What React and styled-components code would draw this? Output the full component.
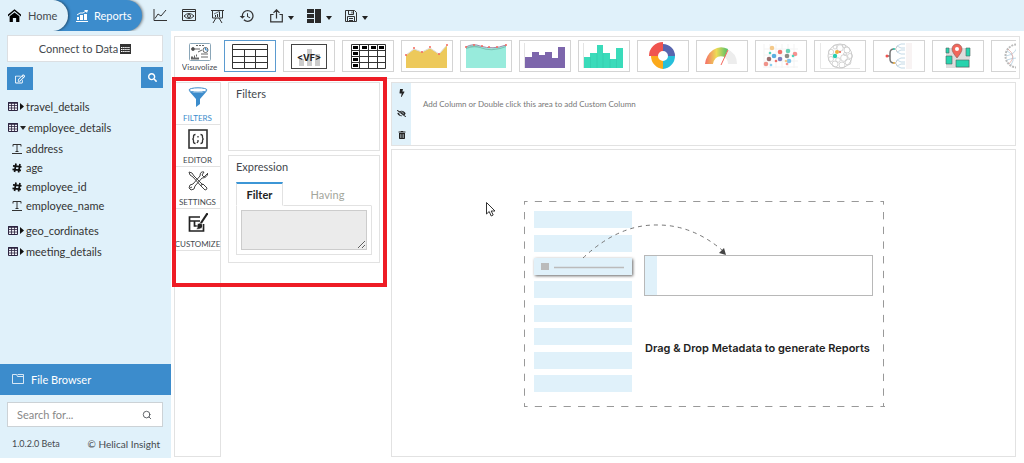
import React from 'react';
import styled, { createGlobalStyle } from 'styled-components';
import { FaBolt, FaEyeSlash, FaRegEdit, FaSearch, FaTrashAlt } from 'react-icons/fa';
import { MdHistory } from 'react-icons/md';
import { FiSearch } from 'react-icons/fi';

const GlobalStyle = createGlobalStyle`
  :root {
    --pale: #e0f1fa;
    --accent: #3c8ccc;
    --line: #e2e2e2;
    --text: #44494e;
  }

  * {
    box-sizing: border-box;
  }

  body {
    margin: 0;
    background-color: #fff;
    color: var(--text);
    font-family: Lato, 'Liberation Sans', sans-serif;
    font-size: 11px;
    line-height: 14px;
  }

  button,
  input,
  textarea {
    margin: 0;
    font: inherit;
    color: inherit;
  }

  button {
    padding: 0;
    border: 0;
    background: none;
    cursor: pointer;
  }

  svg {
    display: block;
    flex: none;
  }
`;

const Page = styled.div`
  display: flex;
  flex-direction: column;
  min-height: 100vh;
  padding-bottom: 5px;
`;

const TopBar = styled.header`
  display: flex;
  align-items: center;
  height: 31px;
  background-color: var(--pale);
`;

const Tabs = styled.nav`
  display: flex;
  align-self: stretch;
`;

const TopTab = styled.a`
  display: flex;
  align-items: center;
  gap: ${(p) => (p.$active ? 6 : 7)}px;
  width: ${(p) => (p.$active ? 88 : 68)}px;
  margin-left: ${(p) => (p.$active ? -14 : 0)}px;
  padding-left: ${(p) => (p.$active ? 22 : 8)}px;
  border-radius: 0 16px 16px 0;
  background-color: ${(p) => (p.$active ? 'var(--accent)' : 'var(--pale)')};
  box-shadow: 1px 0 3px rgba(0, 0, 0, 0.5);
  clip-path: inset(0 -6px 0 0);
  color: ${(p) => (p.$active ? '#fff' : 'var(--text)')};
  text-decoration: none;
  z-index: ${(p) => (p.$active ? 0 : 1)};
`;

const Tools = styled.div`
  display: flex;
  align-items: center;
  gap: 15px;
  margin-left: 11px;
  color: #333;
`;

const ToolMenus = styled.div`
  display: flex;
  align-items: center;
  gap: 13px;
`;

const Tool = styled.button`
  display: flex;
  align-items: center;
  gap: 5px;

  svg + svg {
    margin-top: 5px;
  }
`;

const Body = styled.div`
  display: flex;
  flex: 1;
`;

const Sidebar = styled.aside`
  display: flex;
  flex-direction: column;
  flex: none;
  width: 171px;
  background-color: var(--pale);
`;

const ConnectButton = styled.button`
  display: flex;
  align-items: center;
  justify-content: center;
  gap: 2px;
  height: 27px;
  margin: 4px 8px 0 7px;
  border: 1px solid #dcdfe2;
  background-color: #fff;
`;

const SidebarActions = styled.div`
  display: flex;
  justify-content: space-between;
  align-items: flex-start;
  margin: 5px 8px 0 7px;
`;

const SquareButton = styled.button`
  display: flex;
  align-items: center;
  justify-content: center;
  width: ${(p) => p.$width}px;
  height: ${(p) => p.$height}px;
  background-color: var(--accent);
  color: #fff;
`;

const Tree = styled.ul`
  flex: 1;
  margin: 6px 0 0;
  padding: 0 0 0 8px;
  list-style: none;
  color: #333;

  ul {
    margin: 1px 0 5px;
    padding: 0 0 0 4px;
    list-style: none;
  }
`;

const TableRow = styled.button`
  display: flex;
  align-items: center;
  gap: 2px;
  height: 21px;
`;

const FieldRow = styled.li`
  display: flex;
  align-items: center;
  gap: 4px;
  height: 19px;
`;

const FileBrowser = styled.button`
  display: flex;
  align-items: center;
  gap: 7px;
  height: 31px;
  padding-left: 12px;
  background-color: var(--accent);
  color: #fff;
`;

const SearchBox = styled.label`
  display: flex;
  align-items: center;
  height: 25px;
  margin: 7px 8px 0 7px;
  padding: 0 10px 0 9px;
  border: 1px solid #ccd2d6;
  background-color: #fff;

  input {
    flex: 1;
    min-width: 0;
    padding: 0;
    border: 0;
    outline: none;
    background: none;
  }

  input::placeholder {
    color: #888;
  }
`;

const SidebarFooter = styled.footer`
  display: flex;
  align-items: center;
  justify-content: space-between;
  height: 31px;
  padding: 2px 11px 0 12px;
  font-size: 10px;

  small {
    font-size: 9px;
  }
`;

const Main = styled.main`
  display: flex;
  flex-direction: column;
  flex: 1;
  min-width: 0;
  padding: 5px 4px 0 3px;
`;

const ChartStrip = styled.section`
  height: 43px;
  padding: 3px 3px 0 7px;
  border: 1px solid var(--line);
`;

const ChartList = styled.div`
  display: flex;
  gap: 7px;
  overflow: hidden;
`;

const ChartTile = styled.button`
  display: flex;
  align-items: center;
  justify-content: center;
  flex: none;
  width: 52px;
  height: 32px;
  border: 1px solid ${(p) => (p.$selected ? '#5b9bd0' : '#d4d4d4')};
`;

const Visualize = styled.button`
  display: flex;
  flex-direction: column;
  align-items: center;
  flex: none;
  gap: 1px;
  width: 35px;
  height: 32px;
  padding-top: 3px;
  font-size: 8px;
  line-height: 10px;
`;

const Workspace = styled.div`
  position: relative;
  display: flex;
  flex: 1;
  margin: 3px 4px 1px 0;
`;

const PanelNav = styled.nav`
  flex: none;
  width: 47px;
  border: 1px solid var(--line);
`;

const PanelTab = styled.button`
  display: flex;
  flex-direction: column;
  align-items: center;
  justify-content: space-between;
  width: 100%;
  height: 42px;
  padding: 4px 0 1px;
  border-bottom: 1px solid var(--line);
  color: ${(p) => (p.$active ? 'var(--accent)' : 'var(--text)')};
  font-size: 8px;
  line-height: 10px;
`;

const FilterColumn = styled.div`
  display: flex;
  flex-direction: column;
  flex: none;
  gap: 4px;
  width: 152px;
  margin-left: 7px;
`;

const Panel = styled.section`
  height: ${(p) => p.$height}px;
  padding: 4px 7px 0;
  border: 1px solid var(--line);

  h2 {
    margin: 0;
    font-size: 11px;
    font-weight: 400;
  }
`;

const ExpressionTabs = styled.div`
  display: flex;
  margin-top: 8px;
`;

const ExpressionTab = styled.button`
  width: ${(p) => (p.$active ? 47 : 89)}px;
  height: 24px;
  border-top: 2px solid ${(p) => (p.$active ? '#3c96d6' : 'transparent')};
  border-right: 1px solid ${(p) => (p.$active ? 'var(--line)' : 'transparent')};
  border-bottom: 1px solid ${(p) => (p.$active ? 'transparent' : 'var(--line)')};
  border-left: 1px solid ${(p) => (p.$active ? 'var(--line)' : 'transparent')};
  color: ${(p) => (p.$active ? '#222' : '#a3a69c')};
  font-weight: ${(p) => (p.$active ? 700 : 400)};
`;

const ExpressionBody = styled.div`
  height: 49px;
  padding: 4px;
  border: 1px solid var(--line);
  border-top: 0;

  textarea {
    display: block;
    width: 100%;
    height: 40px;
    border: 1px solid #ccc;
    outline: none;
    background-color: #ebebeb;
  }
`;

const Report = styled.div`
  display: flex;
  flex-direction: column;
  flex: 1;
  gap: 3px;
  min-width: 0;
  margin-left: 11px;
`;

const ColumnArea = styled.section`
  display: flex;
  height: 64px;
  border: 1px solid var(--line);

  p {
    margin: 14px 0 0 12px;
    color: #777;
    font-size: 8px;
  }
`;

const ColumnActions = styled.div`
  display: flex;
  flex-direction: column;
  align-items: center;
  justify-content: space-around;
  width: 19px;
  background-color: var(--pale);
  color: #222;
`;

const Canvas = styled.section`
  position: relative;
  display: flex;
  align-items: center;
  justify-content: center;
  flex: 1;
  padding: 2px 0 0 1px;
  border: 1px solid var(--line);
`;

const Pointer = styled.svg`
  position: absolute;
  top: 52px;
  left: 94px;
`;

const Highlight = styled.div`
  position: absolute;
  top: -5px;
  left: -2px;
  width: 215px;
  height: 210px;
  border: 4px solid #ee1c25;
  pointer-events: none;
`;

const HomeIcon = () => (
  <svg width="13" height="13" viewBox="0 0 16 16" fill="#000">
    <path d="M16 9.2 8 2.6 0 9.2V6.8L8 .2l8 6.6zM14 9v7H10v-5H6v5H2V9l6-4.8z" />
  </svg>
);

const ReportsIcon = () => (
  <svg width="12" height="12" viewBox="0 0 12 12" fill="#fff">
    <path d="M1 7h2v3H1zM4 5h3v5H4zM8 4h3v6H8zM0 11h12v1H0z" />
    <path d="M1 5 4 3l3 0 3-2" fill="none" stroke="#fff" />
    <path d="m8 0 4 0-1 3z" />
  </svg>
);

const LineIcon = () => (
  <svg width="14" height="13" viewBox="0 0 14 13" fill="none" stroke="#333">
    <path d="M1 0v11.500h13M2 9.500 5 5l3 2 5-6" />
  </svg>
);

const PreviewIcon = () => (
  <svg width="14" height="13" viewBox="0 0 14 13" fill="none" stroke="#333">
    <path d="M.5.500h13v11H.500zM0 2.500h14" />
    <path d="M2 7q5-5 10 0-5 5-10 0z" />
    <circle cx="7" cy="7" r="1.500" />
  </svg>
);

const BoardIcon = () => (
  <svg width="13" height="14" viewBox="0 0 13 14" fill="none" stroke="#333">
    <path d="M0 1.500h13M1.500 2v7h10V2M5 9l-3 5M8 9l3 5M4.500 8V6M6.500 8V5M8.500 8V3" />
    <path d="M3 5l2-1 4-2" strokeWidth=".7" />
  </svg>
);

const ShareIcon = () => (
  <svg width="13" height="14" viewBox="0 0 13 14" fill="none" stroke="#333">
    <path d="M3.500 5.500H.700v7.300h11.600V5.500H9.500M6.500 9.500V1M3.500 3.800l3-3 3 3" strokeWidth="1.200" />
  </svg>
);

const LayoutIcon = () => (
  <svg width="14" height="14" viewBox="0 0 14 14" fill="#2a2a2a">
    <path d="M0 0h7v4H0zM0 5h7v4H0zM0 10h7v4H0zM8 0h6v14H8z" />
  </svg>
);

const SaveIcon = () => (
  <svg width="12" height="12" viewBox="0 0 12 12" fill="none" stroke="#333">
    <path d="M.5.500h9l2 2v9H.500zM3.500.500v4h5v-4M2.500 11.500v-5h7v5M4 8.500h4M4 10.500h4M7 1.500v2" />
  </svg>
);

const CaretDown = () => (
  <svg width="6" height="4" viewBox="0 0 6 4">
    <path d="M0 0h6L3 4z" fill="#222" />
  </svg>
);

const CaretRight = () => (
  <svg width="4" height="7" viewBox="0 0 4 7">
    <path d="M0 0v7l4-3.500z" fill="#111" />
  </svg>
);

const DataIcon = () => (
  <svg width="11" height="10" viewBox="0 0 11 10">
    <path d="M0 0h11v10H0z" fill="#333" />
    <path d="M1 3.500h9M1 5.500h9M1 7.500h9" stroke="#fff" strokeDasharray="1.500 .6" />
  </svg>
);

const TableIcon = () => (
  <svg width="10" height="9" viewBox="0 0 10 9" fill="none" stroke="#2d2440">
    <path d="M.5.500h9v8H.500z" fill="#eef0f6" />
    <path d="M0 1h10" strokeWidth="1.500" />
    <path d="M0 3.500h10M0 6h10M3.500 0v9M6.500 0v9" strokeWidth=".8" />
  </svg>
);

const TextIcon = () => (
  <svg width="10" height="10" viewBox="0 0 10 10" fill="none" stroke="#333">
    <path d="M1 2.500V.500h8v2M5 .500v7M3.500 7.500h3M0 9.500h10" />
  </svg>
);

const NumberIcon = () => (
  <svg width="10" height="10" viewBox="0 0 10 10" fill="none" stroke="#111" strokeWidth="1.700">
    <path d="M4 .500 2.500 9M8 1 6.500 9.500M1 2.800l8.500 1M.5 6.300l8.500 1" />
  </svg>
);

const FolderIcon = () => (
  <svg width="12" height="11" viewBox="0 0 12 11" fill="none" stroke="#fff">
    <path d="M.5 9.500v-9h4l1 2h6v7zM5.500.500h6v2" strokeWidth=".8" />
  </svg>
);

const VisualizeIcon = () => (
  <svg width="22" height="18" viewBox="0 0 22 18" fill="none" stroke="#666">
    <rect x=".5" y=".5" width="21" height="17" rx="1" stroke="#8aa6b8" />
    <path d="M7 2.500h8" strokeDasharray="2 1" />
    <circle cx="4" cy="6" r="1.500" fill="#444" />
    <path d="M6 6h5M12 11h7M12 14h7M9 9l4-2" />
    <circle cx="16.500" cy="7" r="2.500" />
    <path d="M16.500 4.500V7H19" stroke="#3c8ccc" />
    <path d="M2 14.500h2M5 13.500h1M7 12.500h1M2 15.500h8" strokeWidth="2" />
  </svg>
);

const FilterIcon = () => (
  <svg width="20" height="20" viewBox="0 0 20 20">
    <path d="M1 4q9 4 18 0l-7 8v5l-4 3v-8z" fill="#3c8ccc" />
    <ellipse cx="10" cy="3" rx="9" ry="2.200" fill="#fff" stroke="#3c8ccc" />
  </svg>
);

const EditorIcon = () => (
  <svg width="20" height="20" viewBox="0 0 20 20" fill="none" stroke="#333">
    <rect x="1" y="1" width="18" height="18" strokeWidth="1.600" />
    <path
      d="M7.500 5.500q-2 0-2 2v1q0 1.500-1.200 1.500 1.200 0 1.200 1.500v1q0 2 2 2M12.500 5.500q2 0 2 2v1q0 1.500 1.200 1.500-1.200 0-1.200 1.500v1q0 2-2 2M10 7v1.500M10 11v1.500l-1 1.500"
      strokeWidth="1.300"
    />
  </svg>
);

const SettingsIcon = () => (
  <svg width="20" height="20" viewBox="0 0 20 20" fill="none" stroke="#444">
    <path d="M1 1l3 1 2 3 9 9M1 1l1 3 3 2 8 9M13 14l2-1 4 4q0 2-2 2l-4-4z" />
    <path d="M19 3l-3 3-2-2 2-3q-4-1-4 4l-7 8q-4 0-4 4l2 2q4 0 4-4l7-8q5 0 6-5zM2 17l2-1" />
  </svg>
);

const CustomizeIcon = () => (
  <svg width="20" height="20" viewBox="0 0 20 20" fill="none" stroke="#222">
    <path d="M12 4H1.500v14h14v-7M2 8h10M6.500 8v5h4" strokeWidth="1.700" />
    <path d="M19 1l-6 9" strokeWidth="2.200" strokeLinecap="round" />
    <path d="M12 10q4 1 2 5-3 2-6 1 2-1 1-3 0-3 3-3z" fill="#222" stroke="#fff" strokeWidth=".6" />
  </svg>
);

const GridChart = () => (
  <svg width="36" height="25" viewBox="0 0 36 25" fill="none" stroke="#333">
    <path d="M.5.500h35v24H.500zM0 5.500h36M0 12.500h36M0 18.500h36M12.500 5v20M23.500 5v20" />
  </svg>
);

const VfChart = () => (
  <svg width="36" height="25" viewBox="0 0 36 25">
    <rect x=".5" y=".5" width="35" height="24" fill="#fff" stroke="#444" />
    <path d="M8 15h5v7H8zM16 5h5v17h-5zM24 10h5v12h-5z" fill="#ccc" />
    <text x="18" y="17" fill="#222" fontFamily="Inter, sans-serif" fontSize="9" fontWeight="700" textAnchor="middle">
      &lt;VF&gt;
    </text>
  </svg>
);

const CrosstabChart = () => (
  <svg width="35" height="25" viewBox="0 0 35 25">
    <path
      d="M.5.500h34v24H.500zM0 6.500h35M0 12.500h35M0 18.500h35M8.500 0v25M17.500 0v25M26.500 0v25"
      fill="none"
      stroke="#333"
    />
    <path d="M2 2h5v3H2zM11 2h5v3h-5zM20 2h5v3h-5zM28 2h5v3h-5zM2 8h5v3H2zM2 14h5v3H2zM2 20h5v3H2z" fill="#000" />
  </svg>
);

const AreaChart = () => (
  <svg width="44" height="26" viewBox="0 0 44 26">
    <path d="M1 12 9 6l8 3 8-4 9 6 8-9v23H1z" fill="#edc95b" />
    <path d="M1 12 9 6l8 3 8-4 9 6 8-9" fill="none" stroke="#ddd" />
    {[[1, 12], [9, 5], [17, 9], [25, 4], [34, 11], [42, 2]].map(([x, y]) => (
      <circle key={x} cx={x} cy={y} r="1" fill="#f4675c" />
    ))}
  </svg>
);

const SplineChart = () => (
  <svg width="42" height="26" viewBox="0 0 42 26">
    <path d="M1 4q7-4 14-1 13 5 26-1v23H1z" fill="#98ebdc" />
    <path d="M1 5q7-4 14-1 13 5 26-1v1q-13 6-26 1-7-2-14 1z" fill="#7cc0b4" />
    <path d="M1 4q7-4 14-1 13 4 26-1" fill="none" stroke="#a08aa8" />
    {[[1, 4], [9, 2], [17, 3], [24, 4], [32, 4], [41, 2]].map(([x, y]) => (
      <circle key={x} cx={x} cy={y} r="1" fill="#f4675c" />
    ))}
  </svg>
);

const StepChart = () => (
  <svg width="42" height="26" viewBox="0 0 42 26">
    <path d="M.5 0v25" stroke="#e4e4e4" />
    <path d="M1 14h7V9h7v3h6V9h7v6h6V4h7v21H1z" fill="#7d66ac" />
  </svg>
);

const BarChart = () => (
  <svg width="42" height="26" viewBox="0 0 42 26">
    <path d="M.5 0v25" stroke="#e4e4e4" />
    <path d="M1 14h6v11H1zM7 10h7v15H7zM14 2h6v23h-6zM20 10h7v15h-7zM27 16h6v9h-6zM33 5h7v20h-7z" fill="#3adbba" />
    <path d="M7.500 14v11M14 10v15M20 10v15M27 16v9M33.500 16v9" stroke="#32caab" strokeWidth=".6" />
  </svg>
);

const DonutChart = () => (
  <svg width="28" height="28" viewBox="-14 -14 28 28">
    <path d="M0-14v9a5 5 0 0 0-5 5h-9a14 14 0 0 1 14-14z" fill="#f0544f" />
    <path d="M0-12A12 12 0 0 1 12 0H5a5 5 0 0 0-5-5z" fill="#5865ae" />
    <path d="M12 0A13 13 0 0 1 0 13V5a5 5 0 0 0 5-5z" fill="#27bfda" />
    <path d="M0 13A13 13 0 0 1-12 0h7a5 5 0 0 0 5 5z" fill="#fba91b" />
  </svg>
);

const GaugeChart = () => (
  <svg width="34" height="18" viewBox="0 0 34 18">
    <defs>
      <linearGradient id="gauge">
        <stop offset="0" stopColor="#f56e6a" />
        <stop offset=".5" stopColor="#eedb55" />
        <stop offset="1" stopColor="#4cc06c" />
      </linearGradient>
    </defs>
    <path d="M22 2q10 4 10 15h-9q0-5-4-7z" fill="#ededed" />
    <path d="M0 17Q1 8 8 3t15-1l-3 8q-10-3-12 7z" fill="url(#gauge)" />
    <path d="M23 3l-7 15" stroke="#f4675c" />
  </svg>
);

const bubbles = [
  [8, 5, 2, '#f4c98a'], [16, 9, 2, '#f0716a'], [24, 8, 2, '#6bd3b7'], [31, 11, 2, '#f59391'],
  [6, 10, 1, '#4fd3bb'], [10, 13, 2, '#5aaee0'], [5, 16, 2, '#9b6f6f'], [16, 16, 2, '#7d7fc0'],
  [23, 13, 2, '#8c8c84'], [29, 13, 1, '#4fd3bb'], [25, 18, 2, '#7fc4ea'], [2, 21, 2, '#f0938a'],
  [7, 22, 1, '#8bd0f0'], [12, 18, 1, '#f0716a'], [22, 18, 1, '#f4c98a'], [23, 21, 1, '#f59391']
];

const BubbleChart = () => (
  <svg width="36" height="26" viewBox="-1 0 36 26">
    <path d="M0 1v24M6 1v24M12 1v24M18 1v24M24 1v24M30 1v24M0 6h34M0 12h34M0 18h34M0 24h34" stroke="#f3f3f3" />
    {bubbles.map(([x, y, r, fill]) => (
      <circle key={`${x}-${y}`} cx={x} cy={y} r={r + 0.3} fill={fill} />
    ))}
  </svg>
);

const packed = [
  [0, -8, 3.3], [7, -6, 3], [10, 0, 2.5], [8, 6, 3], [2, 9, 3], [-5, 8, 3], [-9, 3, 2.5],
  [-9, -4, 2.7], [-5, -9, 2], [4, 2, 3.4], [-2, 4, 2.3], [5, -2, 1.5], [4, -10, 1.6]
];

const PackChart = () => (
  <svg width="40" height="26" viewBox="-20 -13 40 26" fill="none" stroke="#ccc">
    <path d="M-19.500-13v25.500H20" stroke="#e8e8e8" />
    <circle r="12" />
    {packed.map(([x, y, r]) => (
      <circle key={`${x}-${y}`} cx={x} cy={y} r={r} strokeWidth=".8" />
    ))}
    <circle cx="-3" cy="-4" r="2" fill="#f0b040" stroke="none" />
    <circle cx="0" cy="-4" r="1" fill="#e85a4a" stroke="none" />
    <circle cx="-5" cy="0" r="2.200" fill="#2bcdb0" stroke="none" />
  </svg>
);

const TreeChart = () => (
  <svg width="28" height="28" viewBox="0 0 28 28" fill="none" strokeWidth=".8">
    <path d="M21 1h6v26h-6z" fill="#f8f3f3" />
    <path d="M2 14h3M9 7q-4 0-4 4v6q0 4 4 4" stroke="#777" strokeWidth="1.500" />
    <path d="M9 7q3 0 3-3M9 7q3 0 3 3M9 21q3 0 3-3M9 21q3 0 3 3" stroke="#bbb" />
    <path
      d="M20 2h-4q-4 2-4 2t4 2h4M20 8h-4q-4 2-4 2t4 2h4M20 16h-4q-4 2-4 2t4 2h4M20 22h-4q-4 2-4 2t4 2h4"
      stroke="#b5cfdf"
    />
    <circle cx="2" cy="14" r="1.500" fill="#f0544f" />
    <circle cx="9" cy="7" r="1" fill="#2bcdb0" />
    <circle cx="9" cy="21" r="1" fill="#f0b040" />
  </svg>
);

const MapChart = () => (
  <svg width="26" height="26" viewBox="0 0 26 26">
    <path d="M1 5h24v20H1z" fill="#ddd" />
    <path d="M1 5h3v5H1zM21 5h4v8h-4zM1 13h6v8H1zM11 17h13v7H11z" fill="#28d3ae" stroke="#49665f" strokeWidth=".6" />
    <path d="M12 15Q7 9 7 6a5 5 0 0 1 10 0q0 3-5 9z" fill="#f1675c" stroke="#8d5551" strokeWidth=".6" />
    <circle cx="12" cy="6" r="2" fill="#fff" />
  </svg>
);

const ChordChart = () => (
  <svg width="26" height="26" viewBox="-13 -13 26 26" fill="none">
    <circle r="11.500" stroke="#bbb" strokeWidth="2" strokeDasharray="2 1" />
    <path d="M-10-5Q0 0-6 9M-11 0Q0-2 0-11M-10 4Q0 0 10 4" stroke="#a9c9dd" strokeWidth=".7" />
    <path d="M-9-7Q0 0-8 8" stroke="#e0a39e" strokeWidth=".7" />
  </svg>
);

const charts = [
  ['Table', GridChart],
  ['Custom chart', VfChart],
  ['Crosstab', CrosstabChart],
  ['Area', AreaChart],
  ['Spline', SplineChart],
  ['Step', StepChart],
  ['Bar', BarChart],
  ['Donut', DonutChart],
  ['Gauge', GaugeChart],
  ['Bubble', BubbleChart],
  ['Circle pack', PackChart],
  ['Dendrogram', TreeChart],
  ['Map', MapChart],
  ['Chord', ChordChart]
];

const panels = [
  ['FILTERS', FilterIcon],
  ['EDITOR', EditorIcon],
  ['SETTINGS', SettingsIcon],
  ['CUSTOMIZE', CustomizeIcon]
];

const tables = [
  { name: 'travel_details' },
  {
    name: 'employee_details',
    fields: [
      ['address', TextIcon],
      ['age', NumberIcon],
      ['employee_id', NumberIcon],
      ['employee_name', TextIcon]
    ]
  },
  { name: 'geo_cordinates' },
  { name: 'meeting_details' }
];

const slots = [10, 34, 57, 80, 104, 127, 151, 174];

const DragDropPicture = () => (
  <svg width="361" height="206" viewBox="0 0 361 206" fill="none">
    <defs>
      <filter id="lift" x="-10%" y="-30%" width="120%" height="180%">
        <feDropShadow dx="1" dy="1" stdDeviation="1.500" floodOpacity=".6" />
      </filter>
    </defs>
    <path d="M0 .500h360M0 205.500h361" stroke="#999" strokeDasharray="7.200 7.200" strokeDashoffset="3.600" />
    <path d="M.5 0v206M359.500 0v206" stroke="#999" strokeDasharray="7.350 7.350" strokeDashoffset="3.700" />
    {slots.map((y) => (
      <rect key={y} x="10" y={y} width="98" height="17" fill="#e0f1fa" filter={y === 57 ? 'url(#lift)' : undefined} />
    ))}
    <path d="M17 62h8v7h-8z" fill="#bbb" />
    <path d="M30 66.500h70" stroke="#bbb" strokeWidth="1.500" />
    <path d="M59 57Q95 23 134 24q34 0 64 25" stroke="#777" strokeDasharray="4 4" />
    <path d="M202 54l-7-2 5-5z" fill="#444" />
    <rect x="120.500" y="54.500" width="228" height="40" fill="#fff" stroke="#b8b8b8" />
    <path d="M121 55h12v39h-12z" fill="#e0f1fa" />
    <text x="121" y="151" fill="#222" fontFamily="Inter, sans-serif" fontSize="11" fontWeight="600">
      Drag &amp; Drop Metadata to generate Reports
    </text>
  </svg>
);

const TreeTable = ({ name, fields }) => (
  <li>
    <TableRow>
      <TableIcon />
      {fields ? <CaretDown /> : <CaretRight />}
      <span>{name}</span>
    </TableRow>
    {fields && (
      <ul>
        {fields.map(([field, Icon]) => (
          <FieldRow key={field}>
            <Icon />
            {field}
          </FieldRow>
        ))}
      </ul>
    )}
  </li>
);

const App = () => (
  <Page>
    <GlobalStyle />
    <TopBar>
      <Tabs>
        <TopTab href="#home">
          <HomeIcon />
          Home
        </TopTab>
        <TopTab href="#reports" $active>
          <ReportsIcon />
          Reports
        </TopTab>
      </Tabs>
      <Tools>
        <Tool aria-label="Chart">
          <LineIcon />
        </Tool>
        <Tool aria-label="Preview">
          <PreviewIcon />
        </Tool>
        <Tool aria-label="Present">
          <BoardIcon />
        </Tool>
        <Tool aria-label="History">
          <MdHistory size={16} />
        </Tool>
        <ToolMenus>
          <Tool aria-label="Export">
            <ShareIcon />
            <CaretDown />
          </Tool>
          <Tool aria-label="Layout">
            <LayoutIcon />
            <CaretDown />
          </Tool>
          <Tool aria-label="Save">
            <SaveIcon />
            <CaretDown />
          </Tool>
        </ToolMenus>
      </Tools>
    </TopBar>
    <Body>
      <Sidebar>
        <ConnectButton>
          Connect to Data
          <DataIcon />
        </ConnectButton>
        <SidebarActions>
          <SquareButton aria-label="Edit" $width={26} $height={23}>
            <FaRegEdit size={10} />
          </SquareButton>
          <SquareButton aria-label="Search tables" $width={22} $height={21}>
            <FaSearch size={9} />
          </SquareButton>
        </SidebarActions>
        <Tree>
          {tables.map((table) => (
            <TreeTable key={table.name} {...table} />
          ))}
        </Tree>
        <FileBrowser>
          <FolderIcon />
          File Browser
        </FileBrowser>
        <SearchBox>
          <input type="text" placeholder="Search for..." aria-label="Search for" />
          <FiSearch size={10} />
        </SearchBox>
        <SidebarFooter>
          <small>1.0.2.0 Beta</small>
          <span>© Helical Insight</span>
        </SidebarFooter>
      </Sidebar>
      <Main>
        <ChartStrip>
          <ChartList>
            <Visualize>
              <VisualizeIcon />
              Visuvolize
            </Visualize>
            {charts.map(([name, Chart], i) => (
              <ChartTile key={name} aria-label={name} $selected={i === 0}>
                <Chart />
              </ChartTile>
            ))}
          </ChartList>
        </ChartStrip>
        <Workspace>
          <PanelNav>
            {panels.map(([name, Icon], i) => (
              <PanelTab key={name} $active={i === 0}>
                <Icon />
                {name}
              </PanelTab>
            ))}
          </PanelNav>
          <FilterColumn>
            <Panel $height={69}>
              <h2>Filters</h2>
            </Panel>
            <Panel $height={108}>
              <h2>Expression</h2>
              <ExpressionTabs>
                <ExpressionTab $active>Filter</ExpressionTab>
                <ExpressionTab>Having</ExpressionTab>
              </ExpressionTabs>
              <ExpressionBody>
                <textarea aria-label="Filter expression" />
              </ExpressionBody>
            </Panel>
          </FilterColumn>
          <Report>
            <ColumnArea>
              <ColumnActions>
                <FaBolt size={8} />
                <FaEyeSlash size={9} />
                <FaTrashAlt size={8} />
              </ColumnActions>
              <p>Add Column or Double click this area to add Custom Column</p>
            </ColumnArea>
            <Canvas>
              <DragDropPicture />
              <Pointer width="10" height="15" viewBox="0 0 10 15" fill="#fff" stroke="#333">
                <path d="M.5.500v11.500l2.700-2.500 2 4.500 2-1-2-4h3.800z" />
              </Pointer>
            </Canvas>
          </Report>
          <Highlight />
        </Workspace>
      </Main>
    </Body>
  </Page>
);

export default App;
